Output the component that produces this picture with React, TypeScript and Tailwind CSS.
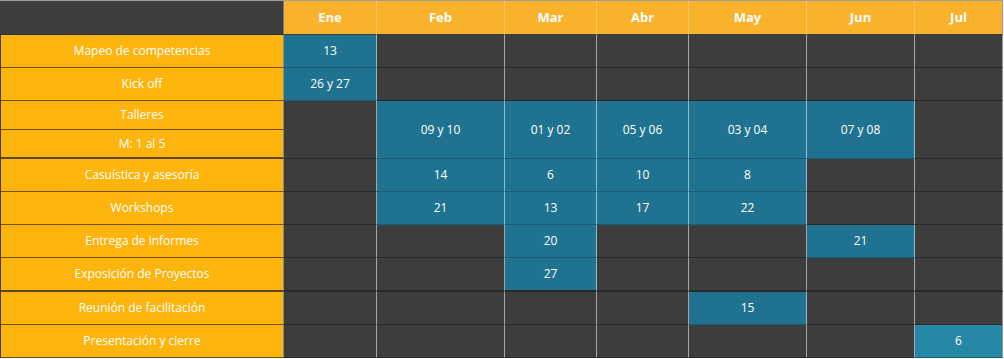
import React from "react";

const months = ["Ene", "Feb", "Mar", "Abr", "May", "Jun", "Jul"];

type Row = { label: string; cells: Record<number, string>; thick?: boolean; light?: number };

const rowsA: Row[] = [
  { label: "Mapeo de competencias", cells: { 0: "13" } },
  { label: "Kick off", cells: { 0: "26 y 27" } },
];
const rowsB: Row[] = [
  { label: "Casuística y asesoría", cells: { 1: "14", 2: "6", 3: "10", 4: "8" } },
  { label: "Workshops", cells: { 1: "21", 2: "13", 3: "17", 4: "22" } },
  { label: "Entrega de informes", cells: { 2: "20", 5: "21" } },
  { label: "Exposición de Proyectos", cells: { 2: "27" }, thick: true },
  { label: "Reunión de facilitación", cells: { 4: "15" } },
  { label: "Presentación y cierre", cells: { 6: "6" }, light: 6 },
];
const talleres: Record<number, string> = { 1: "09 y 10", 2: "01 y 02", 3: "05 y 06", 4: "03 y 04", 5: "07 y 08" };

function Label({ text, thick, border = true }: { text: string; thick?: boolean; border?: boolean }) {
  return (
    <div
      className={`col-start-1 flex items-center justify-center bg-[#fdb40d] text-white border-l border-l-[#4a3a10] border-r border-r-[#8a8a8a] ${
        border ? (thick ? "border-b-2 border-b-[#5a4620]" : "border-b border-b-[#6e5418]") : ""
      }`}
    >
      {text}
    </div>
  );
}

function Cell({ text, thick, light, span, last }: { text?: string; thick?: boolean; light?: boolean; span?: boolean; last?: boolean }) {
  const filled = text !== undefined;
  const bg = filled ? (light ? "bg-[#2589a5]" : "bg-[#1f7390]") : "bg-[#3d3d3d]";
  const br = last ? "border-r-[#9a9a9a]" : filled ? "border-r-[#8cbccc]" : "border-r-[#a6a6a6]";
  const bb = thick
    ? "border-b-2 border-b-[#2a2a2a]"
    : filled
    ? "border-b border-b-[#1b5d74]"
    : "border-b border-b-[#2b2b2b]";
  return (
    <div className={`flex items-center justify-center text-white border-r ${br} ${bb} ${bg} ${span ? "row-span-2" : ""}`}>
      {text}
    </div>
  );
}

export default function App() {
  return (
    <div className="w-[1004px] h-[359px] bg-white overflow-hidden" style={{ fontFamily: "'Open Sans', 'Liberation Sans', sans-serif" }}>
      <div className="grid grid-cols-[284px_93px_128px_92px_92px_118px_108px_88px] grid-rows-[34px_33px_33px_29px_29px_33px_33px_33px_34px_33px_33px] w-[1003px] text-[12px] border-t border-t-[#9e9e9e]">
        <div className="bg-[#3d3d3d] border-b border-b-[#2b2b2b] border-r border-r-[#7a7a7a]" />
        {months.map((m, i) => (
          <div
            key={m}
            className={`flex items-center justify-center bg-[#f8b22b] text-white font-bold text-[13px] border-b border-b-[#3a3a3a] border-r ${
              i === 6 ? "border-r-[#9a9a9a]" : "border-r-[#fac766]"
            }`}
          >
            {m}
          </div>
        ))}
        {rowsA.map((r) => (
          <React.Fragment key={r.label}>
            <Label text={r.label} />
            {months.map((_, i) => (
              <Cell key={i} text={r.cells[i]} last={i === 6} />
            ))}
          </React.Fragment>
        ))}
        <Label text="Talleres" />
        {months.map((_, i) => (
          <Cell key={i} text={talleres[i]} span last={i === 6} thick={false} />
        ))}
        <Label text="M: 1 al 5" thick />
        {rowsB.map((r) => (
          <React.Fragment key={r.label}>
            <Label text={r.label} thick={r.thick} />
            {months.map((_, i) => (
              <Cell key={i} text={r.cells[i]} thick={r.thick} light={r.light === i} last={i === 6} />
            ))}
          </React.Fragment>
        ))}
      </div>
    </div>
  );
}
